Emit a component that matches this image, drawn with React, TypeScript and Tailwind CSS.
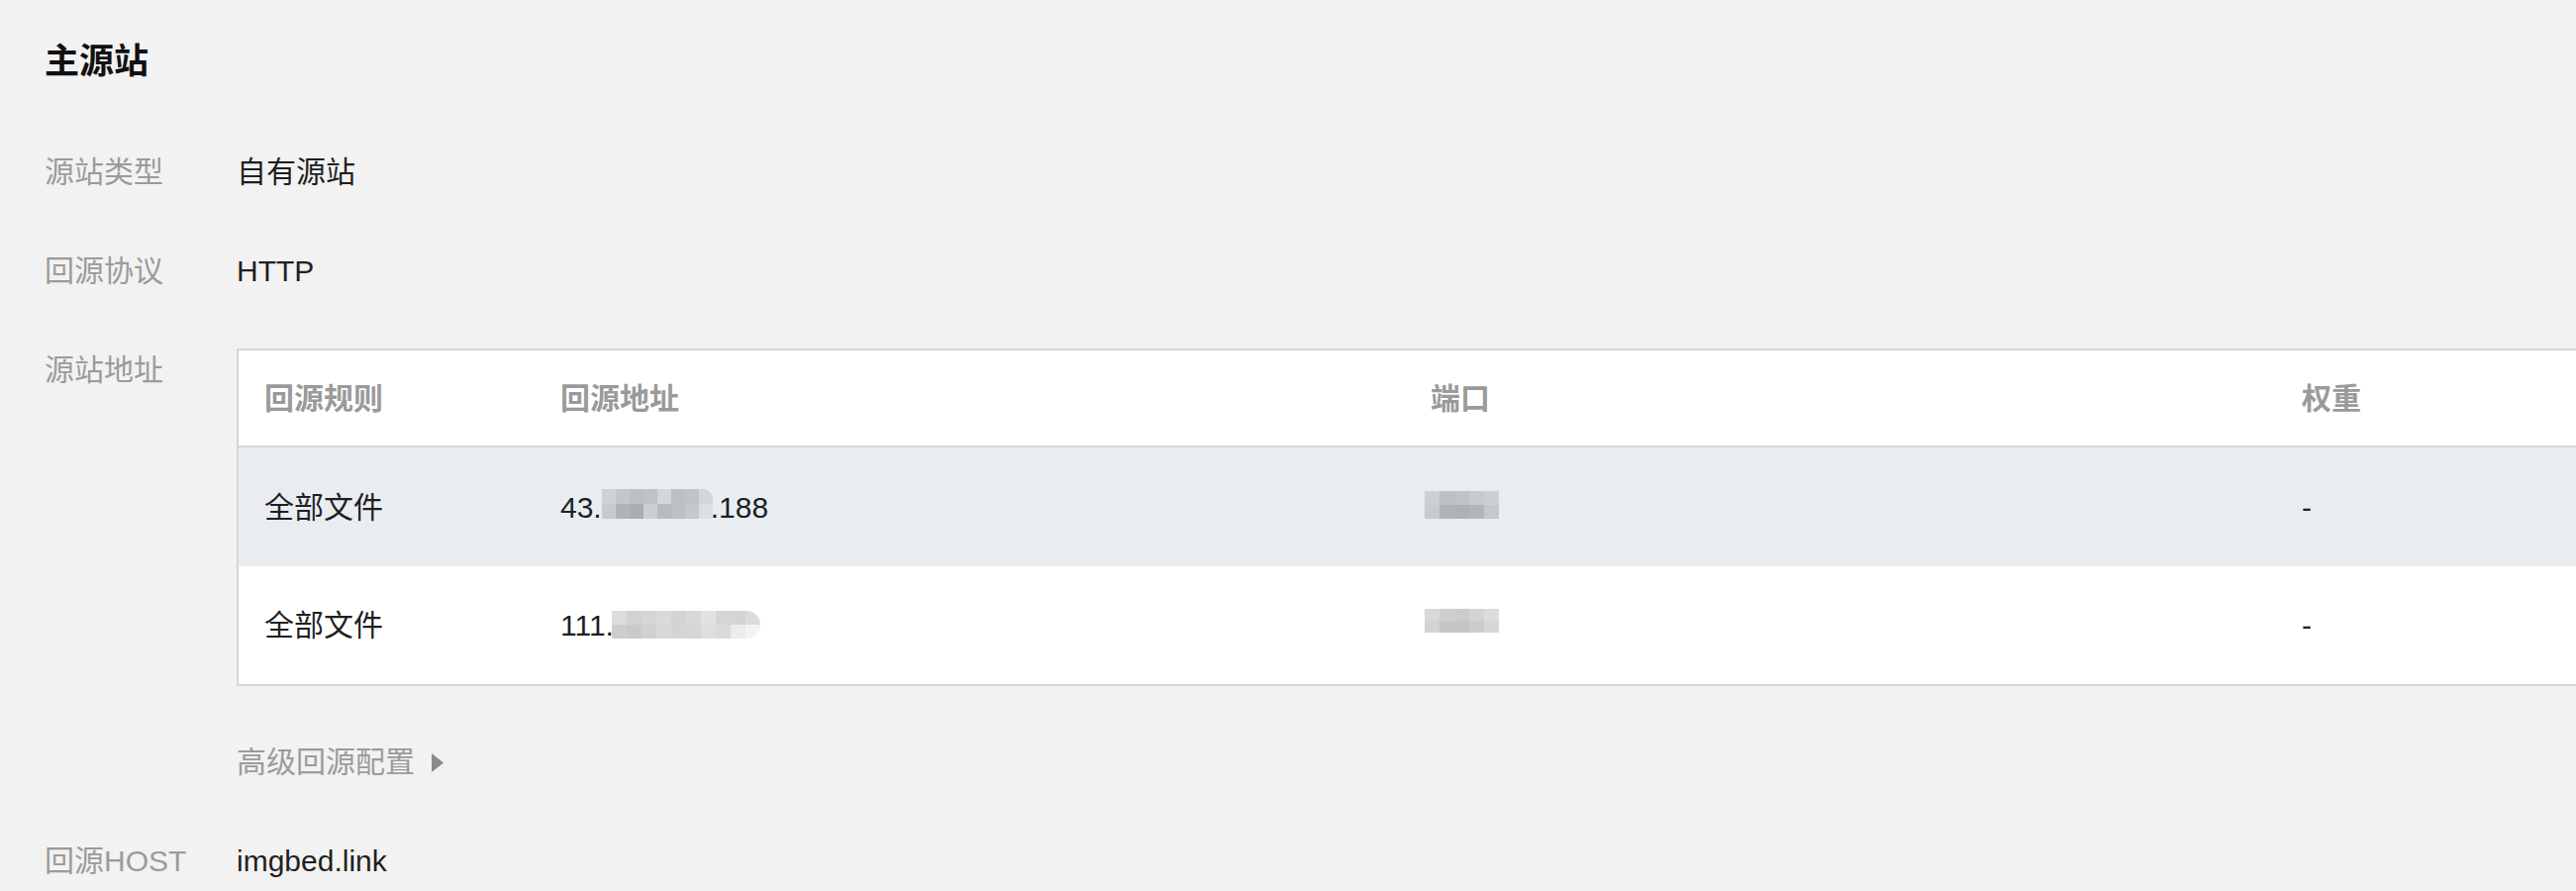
import React from 'react'

const FONT = "font-['Liberation_Sans','Noto_Sans_CJK_SC',sans-serif]"

// pixelated cover over masked values, one class per block
const MASK_ADDR1 = [
  ['bg-[#cfd2d5]', 'bg-[#c3c6ca]', 'bg-[#bcbfc3]', 'bg-[#bfc2c6]', 'bg-[#d4d6d9]', 'bg-[#bcbfc3]', 'bg-[#c0c3c7]', 'bg-[#d4d6d9]'],
  ['bg-[#c8cbce]', 'bg-[#b0b3b7]', 'bg-[#aaadb1]', 'bg-[#cdd0d3]', 'bg-[#b8bbbf]', 'bg-[#bcbfc3]', 'bg-[#c6c9cc]', 'bg-[#dcdee1]'],
]
const MASK_ADDR2 = [
  ['bg-[#dcdcdc]', 'bg-[#d2d2d2]', 'bg-[#d6d6d6]', 'bg-[#dadada]', 'bg-[#d3d3d3]', 'bg-[#d8d8d8]', 'bg-[#e2e2e2]', 'bg-[#d5d5d5]', 'bg-[#d4d4d4]', 'bg-[#dcdcdc]'],
  ['bg-[#cecece]', 'bg-[#cacaca]', 'bg-[#d1d1d1]', 'bg-[#d9d9d9]', 'bg-[#d4d4d4]', 'bg-[#d6d6d6]', 'bg-[#dedede]', 'bg-[#dadada]', 'bg-[#ececec]', 'bg-[#f4f4f4]'],
]
const MASK_PORT1 = [
  ['bg-[#cdd0d3]', 'bg-[#bdc0c4]', 'bg-[#bfc2c6]', 'bg-[#c8cbce]', 'bg-[#cdd0d3]'],
  ['bg-[#c8cbce]', 'bg-[#b0b3b7]', 'bg-[#aeb1b5]', 'bg-[#b2b5b9]', 'bg-[#c6c9cc]'],
]
const MASK_PORT2 = [
  ['bg-[#d9d9d9]', 'bg-[#cfcfcf]', 'bg-[#cccccc]', 'bg-[#d4d4d4]', 'bg-[#dcdcdc]'],
  ['bg-[#d3d3d3]', 'bg-[#c6c6c6]', 'bg-[#c4c4c4]', 'bg-[#cbcbcb]', 'bg-[#d6d6d6]'],
]

function Mask({ grid, cell = 'w-[14px] h-[15px]', className = '' }: { grid: string[][]; cell?: string; className?: string }) {
  return (
    <span className={`inline-flex flex-col overflow-hidden align-middle ${className}`}>
      {grid.map((row, i) => (
        <span key={i} className="flex">
          {row.map((c, j) => <span key={j} className={`${cell} ${c}`} />)}
        </span>
      ))}
    </span>
  )
}

const COLS = 'grid grid-cols-[299px_879px_880px_1fr]'

function Row({ label, children }: { label: string; children: React.ReactNode }) {
  return (
    <div className="flex items-start">
      <div className="w-[194px] shrink-0 leading-[40px] text-[#9b9b9b]">{label}</div>
      <div className="leading-[40px] text-[#1f1f1f]">{children}</div>
    </div>
  )
}

export default function App() {
  return (
    <div className={`h-screen w-full overflow-hidden bg-[#f2f2f2] pl-[45px] pt-[42px] text-[30px] ${FONT}`}>
      <h1 className="text-[35px] font-bold leading-[40px] text-[#111]">主源站</h1>

      <div className="mt-[72px] flex flex-col gap-[60px]">
        <Row label="源站类型">自有源站</Row>
        <Row label="回源协议">HTTP</Row>
      </div>

      <div className="mt-[58px] flex items-start">
        <div className="w-[194px] shrink-0 pt-[2px] leading-[40px] text-[#9b9b9b]">源站地址</div>
        <div className="w-[2450px] shrink-0 border-2 border-[#d0d6df] bg-white">
          <div className={`${COLS} h-[98px] border-b-2 border-[#d0d6df] font-bold text-[#9a9a9a]`}>
            <div className="flex items-center pl-[26px]">回源规则</div>
            <div className="flex items-center pl-[26px]">回源地址</div>
            <div className="flex items-center pl-[26px]">端口</div>
            <div className="flex items-center pl-[26px]">权重</div>
          </div>
          <div className={`${COLS} h-[120px] bg-[#e9edf2] text-[#1f1f1f]`}>
            <div className="flex items-center pl-[26px]">全部文件</div>
            <div className="flex items-center pl-[26px]">
              <span>43.</span>
              <Mask grid={MASK_ADDR1} className="-mt-[6px] rounded-tr-[10px]" />
              <span className="-ml-[2px]">.188</span>
            </div>
            <div className="flex items-center pl-[20px]">
              <Mask grid={MASK_PORT1} cell="w-[15px] h-[14px]" className="-mt-[4px]" />
            </div>
            <div className="flex items-center pl-[26px]">-</div>
          </div>
          <div className={`${COLS} h-[119px] text-[#1f1f1f]`}>
            <div className="flex items-center pl-[26px]">全部文件</div>
            <div className="flex items-center pl-[26px]">
              <span>111.</span>
              <Mask grid={MASK_ADDR2} cell="w-[15px] h-[14px]" className="-ml-[2px] -mt-[2px] rounded-r-full" />
            </div>
            <div className="flex items-center pl-[20px]">
              <Mask grid={MASK_PORT2} cell="w-[15px] h-[12px]" className="-mt-[10px]" />
            </div>
            <div className="flex items-center pl-[26px]">-</div>
          </div>
        </div>
      </div>

      <div className="mt-[57px] flex items-center pl-[194px] leading-[40px] text-[#9b9b9b]">
        <span>高级回源配置</span>
        <svg className="ml-[17px]" width="12" height="19" viewBox="0 0 12 19">
          <path d="M0 0 L12 9.5 L0 19 Z" fill="#8a8a8a" />
        </svg>
      </div>

      <div className="mt-[60px]">
        <Row label="回源HOST">imgbed.link</Row>
      </div>
    </div>
  )
}
